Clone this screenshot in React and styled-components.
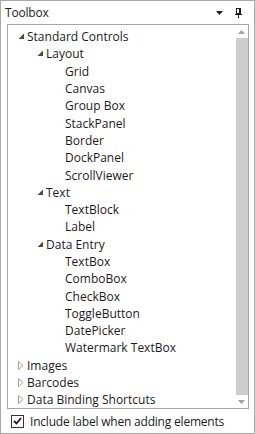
import React from "react";
import styled, { createGlobalStyle } from "styled-components";

const Global = createGlobalStyle`
  html, body { margin: 0; padding: 0; background: #ffffff; }
  * { box-sizing: border-box; }
`;

const Window = styled.div`
  width: 255px;
  height: 434px;
  border: 1px solid #a9a9a9;
  background: #ffffff;
  display: flex;
  flex-direction: column;
  font-family: "Open Sans", "Noto Sans", sans-serif;
  font-size: 12px;
  color: #1b1b1b;
`;

const Header = styled.div`
  height: 23px;
  display: flex;
  align-items: center;
  padding: 0 12px 0 4px;
`;

const Title = styled.div`
  flex: 1;
  letter-spacing: -0.2px;
`;

const HeaderIcon = styled.svg`
  display: block;
  margin-left: ${(p) => p.$gap || 0}px;
`;

const Panel = styled.div`
  margin: 0 5px 0 6px;
  height: 385px;
  border: 1px solid #a6a6a6;
  display: flex;
`;

const Tree = styled.div`
  flex: 1;
  padding-top: 3px;
  overflow: hidden;
`;

const Row = styled.div`
  height: 17.3px;
  display: flex;
  align-items: center;
  padding-left: ${(p) => 7 + p.$level * 19}px;
  white-space: nowrap;
`;

const Expander = styled.span`
  width: 12px;
  height: 12px;
  display: flex;
  align-items: center;
  justify-content: center;
`;

const Label = styled.span`
  padding-left: ${(p) => (p.$leaf ? 12 : 0)}px;
`;

const ScrollBar = styled.div`
  width: 16px;
  display: flex;
  flex-direction: column;
  background: #ffffff;
`;

const ScrollArrow = styled.div`
  height: 13px;
  display: flex;
  align-items: center;
  justify-content: center;
  padding-left: 3px;
`;

const Thumb = styled.div`
  flex: 1;
  background: #cdcdcd;
  margin-left: 4px;
`;

const Footer = styled.div`
  flex: 1;
  display: flex;
  align-items: center;
  padding-left: 10px;
  letter-spacing: -0.2px;
`;

const CheckBox = styled.span`
  width: 13px;
  height: 13px;
  border: 1px solid #333333;
  display: flex;
  align-items: center;
  justify-content: center;
  margin-right: 6px;
  background: #ffffff;
`;

const ExpandedIcon = () => (
  <svg width="7" height="7" viewBox="0 0 7 7">
    <polygon points="6,0.5 6,6 0.5,6" fill="#4a4a4a" />
  </svg>
);

const CollapsedIcon = () => (
  <svg width="6" height="9" viewBox="0 0 6 9">
    <polygon points="0.5,0.5 5,4.5 0.5,8.5" fill="none" stroke="#a0a0a0" strokeWidth="1" />
  </svg>
);

const items = [
  { t: "Standard Controls", l: 0, e: true },
  { t: "Layout", l: 1, e: true },
  { t: "Grid", l: 2 },
  { t: "Canvas", l: 2 },
  { t: "Group Box", l: 2 },
  { t: "StackPanel", l: 2 },
  { t: "Border", l: 2 },
  { t: "DockPanel", l: 2 },
  { t: "ScrollViewer", l: 2 },
  { t: "Text", l: 1, e: true },
  { t: "TextBlock", l: 2 },
  { t: "Label", l: 2 },
  { t: "Data Entry", l: 1, e: true },
  { t: "TextBox", l: 2 },
  { t: "ComboBox", l: 2 },
  { t: "CheckBox", l: 2 },
  { t: "ToggleButton", l: 2 },
  { t: "DatePicker", l: 2 },
  { t: "Watermark TextBox", l: 2 },
  { t: "Images", l: 0, c: true },
  { t: "Barcodes", l: 0, c: true },
  { t: "Data Binding Shortcuts", l: 0, c: true },
];

export default function App() {
  return (
    <>
      <Global />
      <Window>
        <Header>
          <Title>Toolbox</Title>
          <HeaderIcon width="7" height="4" viewBox="0 0 7 4">
            <polygon points="0,0 7,0 3.5,4" fill="#1e1e1e" />
          </HeaderIcon>
          <HeaderIcon $gap={12} width="7" height="10" viewBox="0 0 7 10">
            <rect x="1.5" y="0.5" width="4" height="5" fill="none" stroke="#1e1e1e" strokeWidth="1" />
            <rect x="4" y="1" width="1.5" height="5" fill="#1e1e1e" />
            <rect x="0" y="6" width="7" height="1" fill="#1e1e1e" />
            <rect x="3" y="7" width="1" height="3" fill="#1e1e1e" />
          </HeaderIcon>
        </Header>
        <Panel>
          <Tree>
            {items.map((it) => (
              <Row key={it.t} $level={it.l}>
                {it.e || it.c ? (
                  <Expander>{it.e ? <ExpandedIcon /> : <CollapsedIcon />}</Expander>
                ) : null}
                <Label $leaf={!(it.e || it.c)}>{it.t}</Label>
              </Row>
            ))}
          </Tree>
          <ScrollBar>
            <ScrollArrow>
              <svg width="7" height="4" viewBox="0 0 7 4">
                <polygon points="0,4 7,4 3.5,0" fill="#a0a0a0" />
              </svg>
            </ScrollArrow>
            <Thumb />
            <ScrollArrow>
              <svg width="7" height="4" viewBox="0 0 7 4">
                <polygon points="0,0 7,0 3.5,4" fill="#a0a0a0" />
              </svg>
            </ScrollArrow>
          </ScrollBar>
        </Panel>
        <Footer>
          <CheckBox>
            <svg width="9" height="8" viewBox="0 0 9 8">
              <polyline points="1,4 3.5,6.5 8,1" fill="none" stroke="#1e1e1e" strokeWidth="1.8" />
            </svg>
          </CheckBox>
          Include label when adding elements
        </Footer>
      </Window>
    </>
  );
}
